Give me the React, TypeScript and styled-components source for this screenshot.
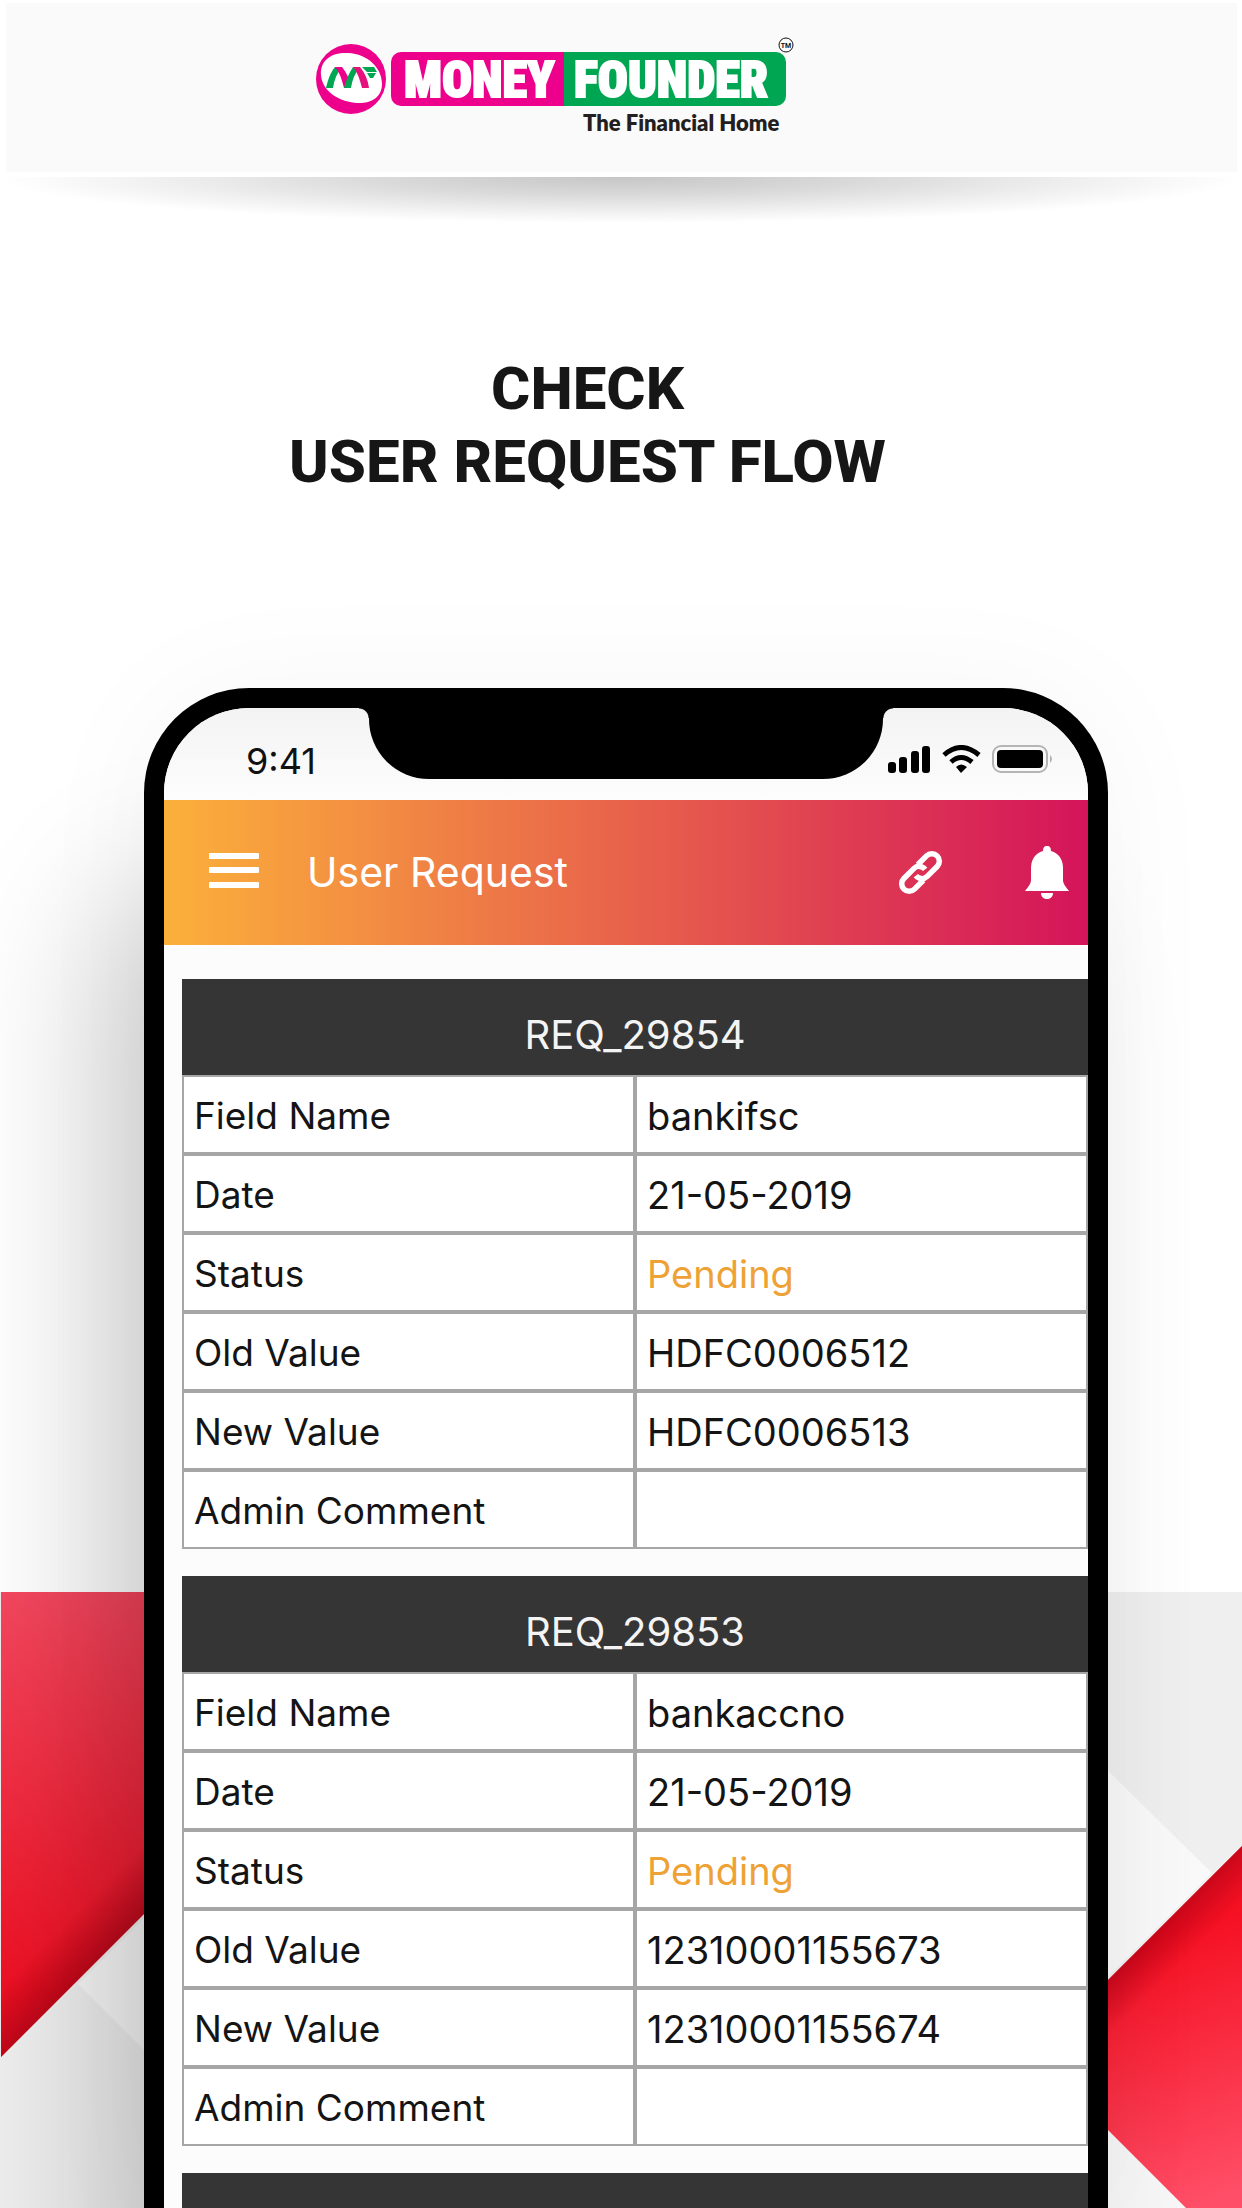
import React from "react";
import styled, { createGlobalStyle } from "styled-components";

const GlobalStyle = createGlobalStyle`
  *, *::before, *::after { box-sizing: border-box; }
  body { margin: 0; background: #fff; }
`;

const Page = styled.main`
  position: relative;
  isolation: isolate;
  display: flex;
  flex-direction: column;
  height: 100vh;
  overflow: hidden;
  background: #fff;
  font-family: Inter, "Liberation Sans", sans-serif;
`;

const Backdrop = styled.svg`
  position: absolute;
  left: 0;
  bottom: 0;
  z-index: -1;
  width: 100%;
  height: 616px;
`;

const BrandBar = styled.header`
  display: flex;
  justify-content: center;
  margin: 3px 5px 0 6px;
  padding: 32px 132px 32px 0;
  background: #fafafa;
`;

const Logo = styled.svg`
  display: block;
  width: 484px;
  height: 105px;
`;

const BarShadow = styled.div`
  height: 46px;
  margin-top: 5px;
  flex: none;
  background: radial-gradient(ellipse 50% 100% at 50% 0, #c6c6c6 0%, #dadada 40%, #f0f0f0 75%, #fff 100%);
`;

const Headline = styled.h1`
  margin: 129px 67px 0 0;
  color: #161616;
  font: 800 60px/73px Roboto, "Liberation Sans", sans-serif;
  text-align: center;
`;

const Phone = styled.section`
  flex: 1;
  min-height: 0;
  margin: 190px 134px 0 144px;
  border: solid #000;
  border-width: 20px 20px 0;
  border-radius: 105px 105px 0 0;
  background: #fcfcfc;
  box-shadow:
    -60px 180px 150px -15px rgba(0, 0, 0, 0.2),
    0 0 130px rgba(0, 0, 0, 0.04);
`;

const Screen = styled.div`
  height: 100%;
  overflow: hidden;
  border-radius: 85px 85px 0 0;
`;

const StatusBar = styled.div`
  display: grid;
  grid-template-columns: 1fr 514px 1fr;
  height: 92px;
  background: linear-gradient(#f3f3f3, #fdfdfd);
`;

const Clock = styled.time`
  padding: 30px 0 0 82px;
  color: #111;
  font-size: 36px;
  line-height: 46px;
  font-weight: 400;
`;

const Notch = styled.div`
  position: relative;
  height: 71px;
  border-radius: 0 0 60px 60px;
  background: #000;

  &::before, &::after {
    content: "";
    position: absolute;
    top: 0;
    width: 10px;
    height: 10px;
  }
  &::before {
    right: 100%;
    background: radial-gradient(circle at 0 100%, transparent 9px, #000 10px);
  }
  &::after {
    left: 100%;
    background: radial-gradient(circle at 100% 100%, transparent 9px, #000 10px);
  }
`;

const StatusIcons = styled.div`
  display: flex;
  justify-content: flex-end;
  padding: 37px 34px 0 0;

  svg {
    flex: none;
    width: 167px;
    height: 28px;
  }
`;

const AppBar = styled.div`
  display: flex;
  align-items: center;
  height: 145px;
  padding: 0 19px 0 45px;
  color: #fff;
  background: linear-gradient(90deg, #fbb03b, #e8624b 50%, #d4145a);
`;

const IconButton = styled.button<{ $gap?: number }>`
  display: flex;
  margin: 0 ${(p) => p.$gap ?? 0}px 0 0;
  padding: 0;
  border: 0;
  background: none;
  color: inherit;
`;

const ScreenTitle = styled.h2`
  flex: 1;
  margin: 0;
  padding-bottom: 2px;
  font-size: 41px;
  line-height: 52px;
  font-weight: 400;
`;

const Requests = styled.div`
  display: flex;
  flex-direction: column;
  gap: 27px;
  padding: 34px 0 0 18px;
`;

const RequestTable = styled.table`
  width: 100%;
  border-spacing: 0;
  table-layout: fixed;
  color: #141414;
  font-size: 38px;
  line-height: 46px;
`;

const RequestTitle = styled.th`
  height: 96px;
  padding: 16px 0 0;
  background: #353535;
  color: #f4f4f4;
  font-size: 40px;
  font-weight: 400;
`;

const Cell = styled.td<{ $pending?: boolean }>`
  height: 79px;
  padding: 2px 10px 0;
  border: 2px solid #a6a6a6;
  background: #fff;
  color: ${(p) => (p.$pending ? "#eea236" : "inherit")};
  font-weight: 400;
  text-align: left;
`;

const LabelCell = styled(Cell)`
  font-size: 37px;
`;

type Request = { id: string; rows: [string, string][] };

const requests: Request[] = [
  {
    id: "REQ_29854",
    rows: [
      ["Field Name", "bankifsc"],
      ["Date", "21-05-2019"],
      ["Status", "Pending"],
      ["Old Value", "HDFC0006512"],
      ["New Value", "HDFC0006513"],
      ["Admin Comment", ""],
    ],
  },
  {
    id: "REQ_29853",
    rows: [
      ["Field Name", "bankaccno"],
      ["Date", "21-05-2019"],
      ["Status", "Pending"],
      ["Old Value", "12310001155673"],
      ["New Value", "12310001155674"],
      ["Admin Comment", ""],
    ],
  },
  { id: "", rows: [] },
];

function BrandLogo() {
  const heavy = {
    fontFamily: '"Liberation Sans Narrow", "Roboto Condensed", "Open Sans Condensed", Roboto, sans-serif',
    fontWeight: 900,
  };
  return (
    <Logo viewBox="314 35 484 105" role="img" aria-label="Money Founder, The Financial Home">
      <circle cx="351" cy="79" r="35" fill="#ec008c" />
      <path d="M321 75C320 59 333 52 348 53C368 54 382 68 382 84C382 98 370 104 356 103C337 101 322 90 321 75Z" fill="#fff" />
      <path d="M326 88C328 80 330 73 335 67H342C337 73 334 80 333 88Z" fill="#00a651" />
      <path d="M335 67H342C347 73 350 80 351 88H344C342 80 340 73 335 67Z" fill="#ec008c" />
      <path d="M344 88C346 80 349 73 353 67H360C355 73 352 80 351 88Z" fill="#00a651" />
      <path d="M353 67H360C365 73 368 80 369 88H362C360 80 358 73 353 67Z" fill="#e5127d" />
      <path d="M362 67H374L377 72H367ZM367 73H376L373 78H370Z" fill="#00a651" />
      <path d="M564 52H401A10 10 0 0 0 391 62V96A10 10 0 0 0 401 106H564Z" fill="#ec008c" />
      <path d="M564 52H776A10 10 0 0 1 786 62V96A10 10 0 0 1 776 106H564Z" fill="#00a651" />
      <g fill="#fff" stroke="#fff" strokeWidth="2" fontSize="50" style={heavy}>
        <text x="404" y="97">MONEY</text>
        <text x="574" y="97">FOUNDER</text>
      </g>
      <circle cx="786" cy="45" r="7" fill="#fafafa" stroke="#111" strokeWidth="1" />
      <text x="786" y="48" textAnchor="middle" fontSize="7" fontWeight="700" fontFamily="Roboto, sans-serif" fill="#111">TM</text>
      <text x="583" y="131" fontSize="22" fontWeight="800" fontFamily="Lato, sans-serif" fill="#231f20">The Financial Home</text>
    </Logo>
  );
}

function Shapes() {
  return (
    <Backdrop viewBox="0 0 1242 616" preserveAspectRatio="none" aria-hidden="true">
      <defs>
        <linearGradient id="redLeft" gradientUnits="userSpaceOnUse" x1="0" y1="0" x2="60" y2="400">
          <stop offset="0" stopColor="#f4485f" />
          <stop offset="1" stopColor="#ee0f22" />
        </linearGradient>
        <linearGradient id="edgeLeft" gradientUnits="userSpaceOnUse" x1="72" y1="393" x2="38" y2="359">
          <stop offset="0" stopColor="#900010" stopOpacity="0.5" />
          <stop offset="1" stopColor="#900010" stopOpacity="0" />
        </linearGradient>
        <linearGradient id="redRight" gradientUnits="userSpaceOnUse" x1="1150" y1="350" x2="1242" y2="600">
          <stop offset="0" stopColor="#f51022" />
          <stop offset="1" stopColor="#ff4f68" />
        </linearGradient>
        <linearGradient id="edgeRight" gradientUnits="userSpaceOnUse" x1="1175" y1="321" x2="1203" y2="349">
          <stop offset="0" stopColor="#a80014" stopOpacity="0.55" />
          <stop offset="1" stopColor="#a80014" stopOpacity="0" />
        </linearGradient>
      </defs>
      <rect width="1242" height="616" fill="#efefef" />
      <path d="M78 392L160 310H621V616H302Z" fill="#f8f8f8" />
      <path d="M1090 161L1212 281L1090 403Z" fill="#f9f9f9" />
      <path d="M1090 520L1186 616H1090Z" fill="#f7f7f7" />
      <path d="M1 0H160V306L1 465Z" fill="url(#redLeft)" />
      <path d="M1 0H160V306L1 465Z" fill="url(#edgeLeft)" />
      <path d="M1242 254L1090 406V520L1186 616H1242Z" fill="url(#redRight)" />
      <path d="M1242 254L1090 406V520L1186 616H1242Z" fill="url(#edgeRight)" />
    </Backdrop>
  );
}

function App() {
  return (
    <>
      <GlobalStyle />
      <Page>
        <Shapes />
        <BrandBar>
          <BrandLogo />
        </BrandBar>
        <BarShadow />
        <Headline>
          CHECK
          <br />
          USER REQUEST FLOW
        </Headline>
        <Phone>
          <Screen>
            <StatusBar>
              <Clock>9:41</Clock>
              <Notch />
              <StatusIcons>
                <svg viewBox="887 745 167 28" aria-hidden="true">
                  <rect x="888" y="762" width="8" height="11" rx="3" />
                  <rect x="899" y="757" width="8" height="16" rx="3" />
                  <rect x="911" y="751" width="8" height="22" rx="3" />
                  <rect x="922" y="746" width="8" height="27" rx="3" />
                  <g fill="none" stroke="#000" strokeWidth="5">
                    <path d="M944 755Q961 740 979 755" />
                    <path d="M951 762Q961 753 972 762" />
                  </g>
                  <path d="M956 767Q961 762 967 767L961 773Z" />
                  <rect x="993" y="746" width="54" height="26" rx="8" fill="none" stroke="#b5b5b5" strokeWidth="2" />
                  <rect x="997" y="750" width="46" height="18" rx="4" />
                  <path d="M1050 755Q1054 759 1050 763Z" fill="#b0b0b0" />
                </svg>
              </StatusIcons>
            </StatusBar>
            <AppBar>
              <IconButton type="button" aria-label="Menu" $gap={48}>
                <svg width="50" height="40" viewBox="0 0 50 40" fill="currentColor">
                  <rect width="50" height="6" rx="1" />
                  <rect y="14" width="50" height="6" rx="1" />
                  <rect y="29" width="50" height="6" rx="1" />
                </svg>
              </IconButton>
              <ScreenTitle>User Request</ScreenTitle>
              <IconButton type="button" aria-label="Links" $gap={82}>
                <svg width="45" height="45" viewBox="0 0 45 45" fill="none" stroke="currentColor" strokeWidth="5.5">
                  <g transform="rotate(-45 22.5 22.5)">
                    <path d="M19 30H6.5A7.5 7.5 0 0 1 6.5 15H20.5A7.5 7.5 0 0 1 28 23.5" />
                    <path d="M26 15H38.5A7.5 7.5 0 0 1 38.5 30H24.5A7.5 7.5 0 0 1 17 21.5" />
                  </g>
                </svg>
              </IconButton>
              <IconButton type="button" aria-label="Notifications">
                <svg width="44" height="53" viewBox="0 0 44 53" fill="currentColor">
                  <path d="M22 0C25 0 26 2 26 5C34 7 38 14 38 22V34C38 38 41 41 44 45H0C3 41 6 38 6 34V22C6 14 10 7 18 5C18 2 19 0 22 0ZM16 47H28C28 51 25 53 22 53S16 51 16 47Z" />
                </svg>
              </IconButton>
            </AppBar>
            <Requests>
              {requests.map((request) => (
                <RequestTable key={request.id}>
                  <thead>
                    <tr>
                      <RequestTitle colSpan={2}>{request.id}</RequestTitle>
                    </tr>
                  </thead>
                  <tbody>
                    {request.rows.map(([label, value]) => (
                      <tr key={label}>
                        <LabelCell as="th" scope="row">{label}</LabelCell>
                        <Cell $pending={value === "Pending"}>{value}</Cell>
                      </tr>
                    ))}
                  </tbody>
                </RequestTable>
              ))}
            </Requests>
          </Screen>
        </Phone>
      </Page>
    </>
  );
}

export default App;
